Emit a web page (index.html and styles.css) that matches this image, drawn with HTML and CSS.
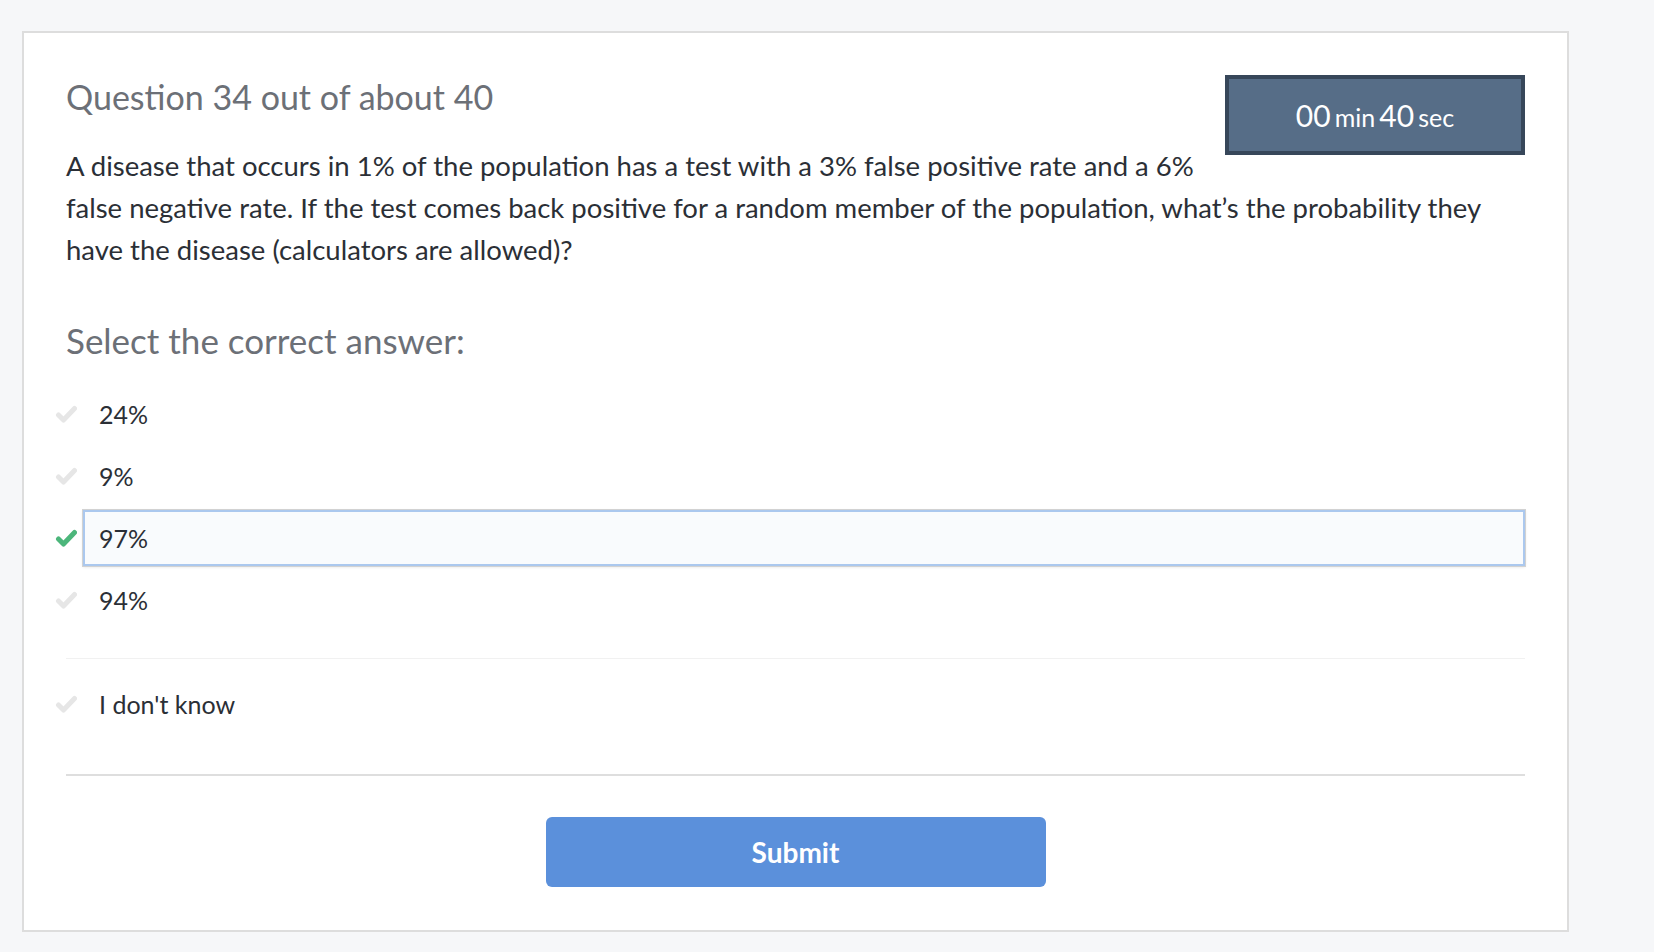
FILE: index.html
```html
<!DOCTYPE html>
<html lang="en">
<head>
<meta charset="utf-8">
<title>Question 34</title>
<link rel="stylesheet" href="styles.css">
</head>
<body>
<div class="page">
  <div class="card">
    <div class="timer"><span class="num">00</span> <span class="unit">min</span> <span class="num">40</span> <span class="unit">sec</span></div>
    <h2 class="title">Question 34 out of about 40</h2>
    <p class="question">A disease that occurs in 1% of the population has a test with a 3% false positive rate and a 6% false negative rate. If the test comes back positive for a random member of the population, what’s the probability they have the disease (calculators are allowed)?</p>
    <h3 class="prompt">Select the correct answer:</h3>
    <div class="options">
      <div class="option">
        <svg class="check" viewBox="0 0 24 18"><polyline points="5.5,10 10.5,15 21.5,3.5" /></svg>
        <div class="answer">24%</div>
      </div>
      <div class="option">
        <svg class="check" viewBox="0 0 24 18"><polyline points="5.5,10 10.5,15 21.5,3.5" /></svg>
        <div class="answer">9%</div>
      </div>
      <div class="option selected">
        <svg class="check" viewBox="0 0 24 18"><polyline points="5.5,10 10.5,15 21.5,3.5" /></svg>
        <div class="answer">97%</div>
      </div>
      <div class="option">
        <svg class="check" viewBox="0 0 24 18"><polyline points="5.5,10 10.5,15 21.5,3.5" /></svg>
        <div class="answer">94%</div>
      </div>
    </div>
    <div class="dontknow">
      <div class="option">
        <svg class="check" viewBox="0 0 24 18"><polyline points="5.5,10 10.5,15 21.5,3.5" /></svg>
        <div class="answer">I don't know</div>
      </div>
    </div>
    <div class="actions">
      <button class="submit" type="button">Submit</button>
    </div>
  </div>
</div>
</body>
</html>
```

FILE: styles.css
```css
html, body {
  margin: 0;
  padding: 0;
  background: #f6f7f9;
  font-family: Lato, "Open Sans", "Liberation Sans", sans-serif;
}

.page {
  padding: 31px 0 0 22px;
}

.card {
  box-sizing: border-box;
  width: 1547px;
  height: 901px;
  background: #ffffff;
  border: 2px solid #dddddd;
  padding: 42px 42px 42px 42px;
}

.timer {
  float: right;
  box-sizing: border-box;
  width: 300px;
  height: 80px;
  background: #566d87;
  border: 4px solid #37475a;
  color: #ffffff;
  text-align: center;
  line-height: 72px;
}

.timer .num {
  font-size: 30px;
}

.timer .unit {
  font-size: 25px;
}

.title {
  margin: 2px 0 0 0;
  font-size: 34px;
  font-weight: 400;
  line-height: 1.2;
  color: #6c7077;
}

.question {
  margin: 27px 0 0 0;
  font-size: 27.5px;
  line-height: 42px;
  color: #2b2f36;
}

.prompt {
  margin: 48px 0 0 0;
  font-size: 35px;
  font-weight: 400;
  line-height: 1.2;
  color: #6c7077;
}

.options {
  margin-top: 25px;
  display: flex;
  flex-direction: column;
  gap: 6px;
}

.option {
  display: flex;
  align-items: center;
  margin-left: -13px;
}

.check {
  flex: none;
  width: 24px;
  height: 18px;
  fill: none;
  stroke: #e6e6e6;
  stroke-width: 5;
  stroke-linecap: round;
  stroke-linejoin: round;
}

.selected .check {
  stroke: #4cb67b;
}

.answer {
  flex: 1;
  box-sizing: border-box;
  height: 56px;
  margin-left: 6px;
  padding: 0 14px;
  border: 2px solid transparent;
  display: flex;
  align-items: center;
  font-size: 25px;
  color: #2b2f36;
}

.selected .answer {
  border-color: #abc8ee;
  background: #f9fbfd;
  box-shadow: 0 0 0 1px #d2d2d2, 0 1px 3px rgba(0, 0, 0, 0.12);
}

.dontknow {
  margin-top: 30px;
  border-top: 1px solid #f1f1f1;
  padding-top: 17px;
  padding-bottom: 42px;
  border-bottom: 2px solid #dedede;
}

.actions {
  display: flex;
  justify-content: center;
  padding-top: 41px;
}

.submit {
  width: 500px;
  height: 70px;
  border: none;
  border-radius: 6px;
  background: #5b90db;
  color: #ffffff;
  font-family: Lato, "Open Sans", "Liberation Sans", sans-serif;
  font-size: 28px;
  font-weight: 700;
  cursor: pointer;
}
```
